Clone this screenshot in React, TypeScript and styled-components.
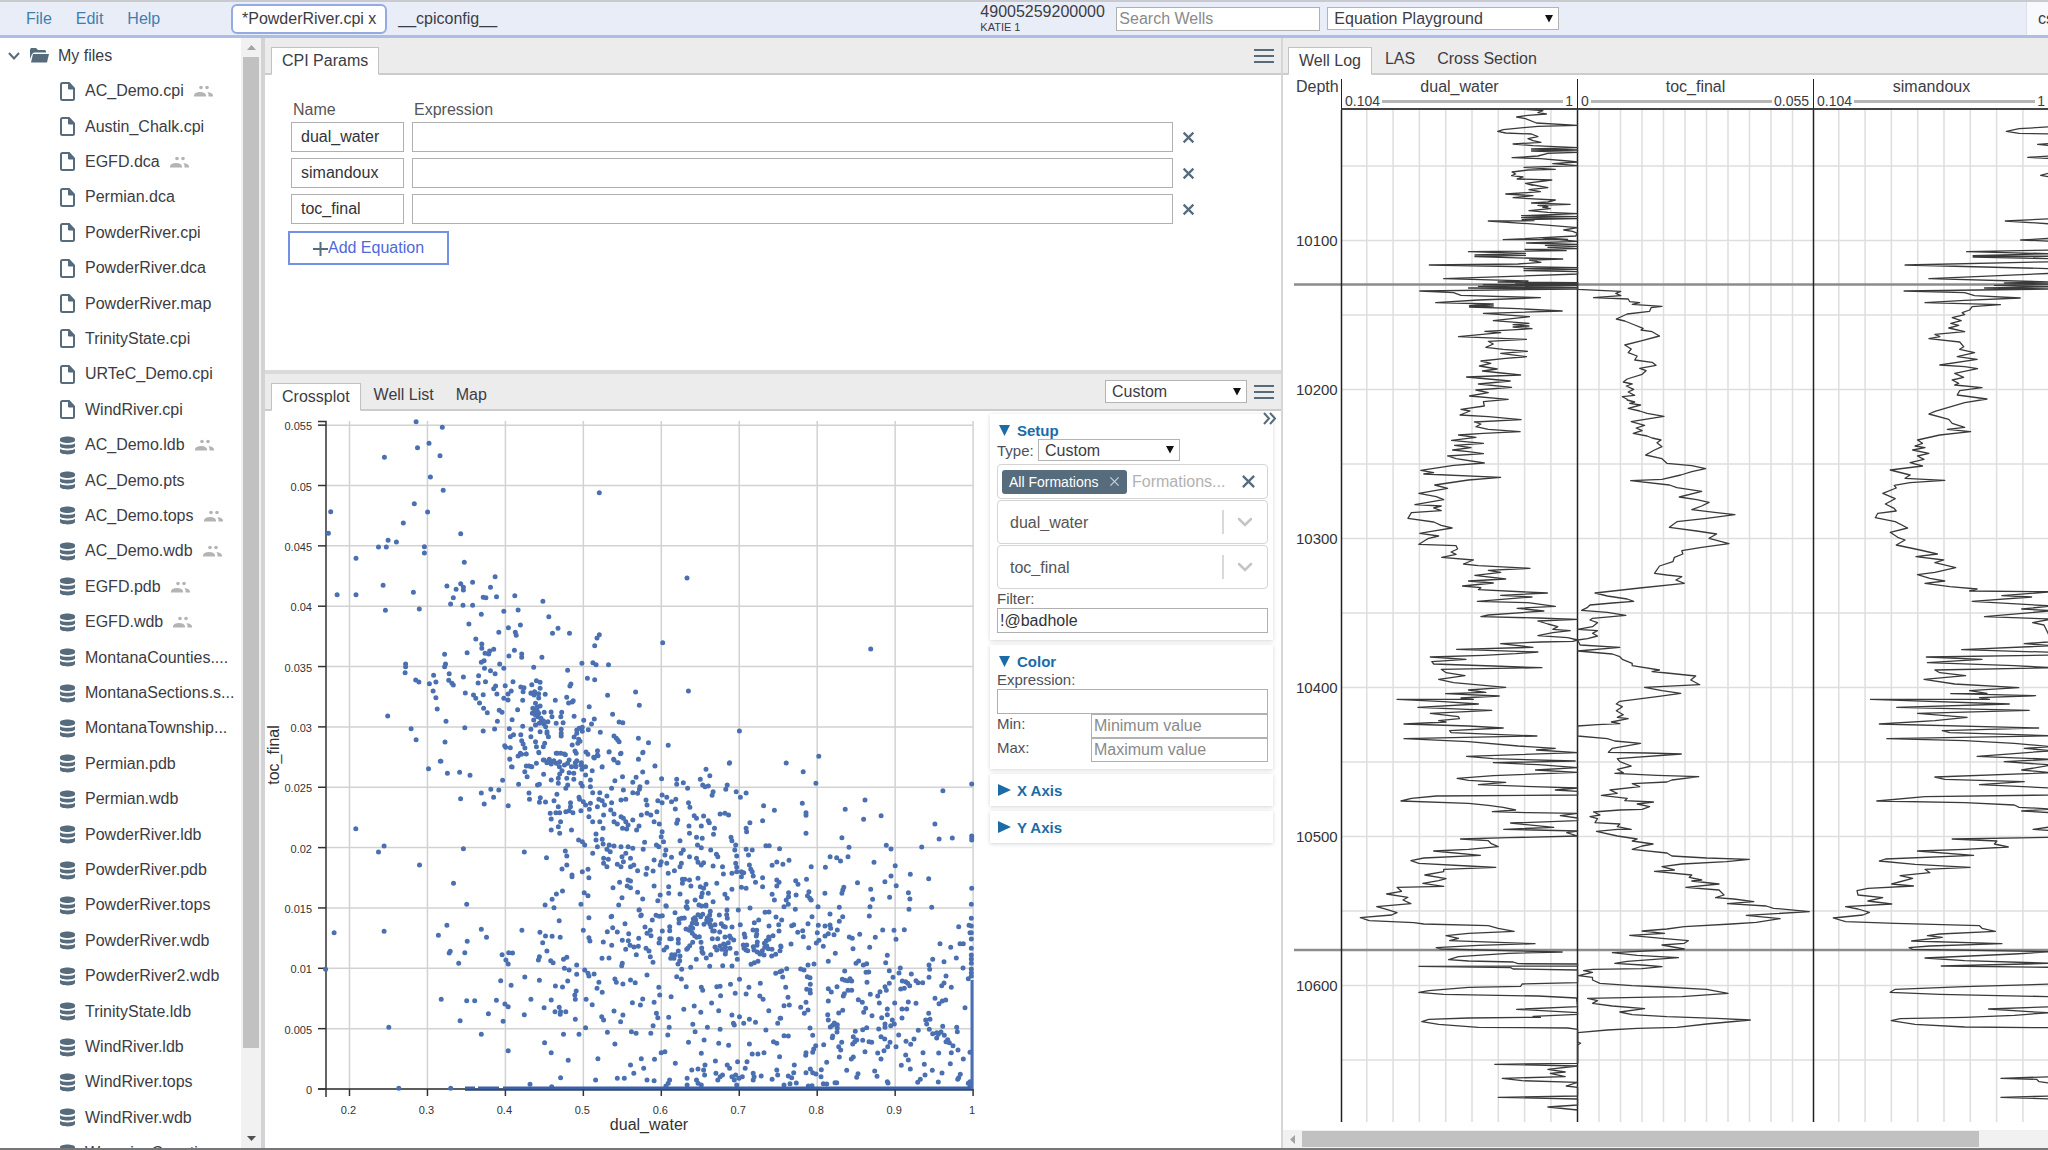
import React from 'react';
import styled, { createGlobalStyle, css } from 'styled-components';

const slate = '#566b7c';
const line = '#cccccc';

const GlobalStyle = createGlobalStyle`
  *, *::before, *::after { box-sizing: border-box; }
  body { margin: 0; background: #fff; overflow: hidden; }
  body, button, input, select {
    font-family: "Liberation Sans", Arial, sans-serif;
    font-size: 16px;
    color: #3c3c44;
  }
  button { cursor: pointer; }
`;

const Page = styled.div`
  display: flex;
  flex-direction: column;
  height: 100vh;
  border-top: 2px solid #c9cacf;
  border-bottom: 2px solid #77777a;
`;

/* ---------- header ---------- */

const Header = styled.header`
  flex: none;
  display: grid;
  grid-template-columns: minmax(0, 981fr) auto minmax(0, 489fr);
  height: 36px;
  background: #e9edf8;
  border-bottom: 3px solid #aebde2;
`;

const HeaderLeft = styled.div`
  display: flex;
  align-items: center;
`;

const Menu = styled.nav`
  display: flex;
  gap: 24px;
  width: 231px;
  padding-left: 26px;
`;

const MenuButton = styled.button`
  padding: 0;
  border: 0;
  background: none;
  color: #3f7fae;
`;

const FileTab = styled.button<{ $active?: boolean }>`
  height: 30px;
  padding: 0 9px;
  border: 2px solid ${p => (p.$active ? '#93abe2' : 'transparent')};
  border-radius: 6px;
  background: ${p => (p.$active ? '#fff' : 'transparent')};
  white-space: nowrap;
`;

const HeaderCenter = styled.div`
  display: flex;
  align-items: center;
  gap: 7px;
`;

const WellName = styled.div`
  display: flex;
  flex-direction: column;
  width: 129px;
  line-height: 16px;
`;

const WellSub = styled.span`
  font-size: 11px;
  line-height: 14px;
`;

const HeaderRight = styled.div`
  display: flex;
  justify-content: flex-end;
`;

const UserButton = styled.button`
  width: 22px;
  padding: 0 0 0 11px;
  border: 0;
  border-left: 1px solid #dcdfe8;
  background: #f8f9fc;
  overflow: hidden;
  text-align: left;
`;

/* ---------- form parts ---------- */

const TextInput = styled.input<{ $h: number; $w?: string; $pad?: number }>`
  width: ${p => p.$w ?? '100%'};
  min-width: 0;
  height: ${p => p.$h}px;
  padding: 0 ${p => p.$pad ?? 2}px;
  border: 1px solid #b0b0b0;
  background: #fff;
  color: #333338;
  &::placeholder { color: #8a8a8a; opacity: 1; }
`;

const SelectWrap = styled.span<{ $w: string }>`
  display: inline-grid;
  grid-template-columns: minmax(0, 1fr);
  align-items: center;
  width: ${p => p.$w};
  > * { grid-area: 1 / 1; }
  > svg { justify-self: end; pointer-events: none; }
`;

const NativeSelect = styled.select<{ $h: number }>`
  appearance: none;
  width: 100%;
  height: ${p => p.$h}px;
  padding: 0 24px 0 6px;
  border: 1px solid #b4b4b4;
  border-radius: 0;
  background: #fff;
`;

const SoftSelect = styled(NativeSelect)`
  padding: 0 56px 0 12px;
  border-color: #d4d4d4;
  border-radius: 4px;
  color: #555;
`;

function DropDown({ label, value, w, h }: { label: string; value: string; w: string; h: number }) {
  return (
    <SelectWrap $w={w}>
      <NativeSelect aria-label={label} $h={h} defaultValue={value}>
        <option>{value}</option>
      </NativeSelect>
      <svg width="16" height="10" viewBox="0 0 16 10"><path d="M2 1h8L6 8.500z" fill="#111" /></svg>
    </SelectWrap>
  );
}

function CurveSelect({ label, value }: { label: string; value: string }) {
  return (
    <SelectWrap $w="100%">
      <SoftSelect aria-label={label} $h={44} defaultValue={value}>
        <option>{value}</option>
      </SoftSelect>
      <svg width="48" height="24" viewBox="0 0 48 24" fill="none">
        <path d="M3 0v24" stroke="#ccc" strokeWidth="1.500" />
        <path d="M19 9l6 6 6-6" stroke="#c4c4c4" strokeWidth="2.500" strokeLinecap="round" />
      </svg>
    </SelectWrap>
  );
}

const IconButton = styled.button`
  display: flex;
  align-items: center;
  justify-content: center;
  padding: 0;
  border: 0;
  background: none;
`;

function Cross({ size, color = slate, weight = 2 }: { size: number; color?: string; weight?: number }) {
  return (
    <svg width={size} height={size} viewBox="0 0 12 12">
      <path d="M1.500 1.500l9 9M10.500 1.500l-9 9" stroke={color} strokeWidth={weight} />
    </svg>
  );
}

function Burger({ label }: { label: string }) {
  return (
    <IconButton aria-label={label}>
      <svg width="20" height="16" viewBox="0 0 20 16">
        <path d="M0 2h20M0 8h20M0 14h20" stroke={slate} strokeWidth="2" />
      </svg>
    </IconButton>
  );
}

/* ---------- workspace ---------- */

const Workspace = styled.div`
  flex: 1;
  min-height: 0;
  display: grid;
  grid-template-columns: 261px minmax(0, 1020fr) minmax(0, 767fr);
  grid-template-rows: minmax(0, 1fr);
`;

const Sidebar = styled.aside`
  display: flex;
  overflow: hidden;
`;

const Tree = styled.ul`
  flex: 1;
  display: flex;
  flex-direction: column;
  height: calc(100% + 23px);
  margin: 0;
  padding: 0;
  list-style: none;
`;

const TreeRow = styled.li<{ $root?: boolean }>`
  flex: 1;
  display: flex;
  align-items: center;
  padding-left: ${p => (p.$root ? 8 : 60)}px;
  gap: ${p => (p.$root ? 9 : 10)}px;
  white-space: nowrap;
  line-height: 20px;
  svg { flex: none; }
`;

const ScrollTrack = styled.div<{ $horizontal?: boolean }>`
  flex: none;
  display: flex;
  align-items: center;
  background: #f1f1f1;
  ${p =>
    p.$horizontal
      ? css`height: 18px;`
      : css`
          flex-direction: column;
          width: 20px;
        `}
`;

const ScrollThumb = styled.div<{ $horizontal?: boolean; $size: number }>`
  flex: ${p => p.$size} 1 0;
  ${p => (p.$horizontal ? 'height: 16px;' : 'width: 16px;')}
  background: #c1c1c1;
`;

const ScrollSpace = styled.div<{ $size: number }>`
  flex: ${p => p.$size} 1 0;
`;

const ScrollArrow = styled.div`
  flex: none;
  display: flex;
  align-items: center;
  justify-content: center;
  width: 19px;
  height: 19px;
`;

const Middle = styled.main`
  display: grid;
  grid-template-rows: minmax(0, 332fr) minmax(0, 778fr);
  border-left: 4px solid #d3d3d5;
`;

const Panel = styled.section<{ $divided?: boolean }>`
  display: flex;
  flex-direction: column;
  min-width: 0;
  min-height: 0;
  ${p => p.$divided && 'border-top: 4px solid #dadada;'}
`;

const TabBar = styled.div`
  flex: none;
  display: flex;
  align-items: flex-end;
  height: 37px;
  padding: 0 7px 0 6px;
  border-bottom: 2px solid ${line};
  background: #ececec;
`;

const Tab = styled.button<{ $active?: boolean }>`
  height: 28px;
  padding: 0 10px;
  border: 1px solid transparent;
  background: transparent;
  white-space: nowrap;
  ${p =>
    p.$active &&
    css`
      margin: 0 2px -2px 0;
      border-color: #c2c2c2;
      border-bottom-color: #fff;
      background: #fff;
    `}
`;

const TabTools = styled.div`
  display: flex;
  align-items: center;
  align-self: center;
  gap: 7px;
  margin-left: auto;
`;

/* ---------- equations ---------- */

const Equations = styled.div`
  padding: 24px 86px 0 23px;
`;

const EquationRow = styled.div`
  display: grid;
  grid-template-columns: 113px minmax(0, 1fr) 14px;
  column-gap: 8px;
  align-items: center;
  padding-left: 3px;
  margin-bottom: 6px;
`;

const EquationHead = styled(EquationRow)`
  margin-bottom: 2px;
  line-height: 21px;
  color: #55555a;
  span { padding-left: 2px; }
`;

const AddButton = styled.button`
  display: flex;
  align-items: center;
  justify-content: center;
  width: 161px;
  height: 34px;
  margin-top: 7px;
  border: 2px solid #7390e4;
  background: #fff;
  color: #5068dc;
`;

/* ---------- crossplot ---------- */

const CrossplotBody = styled.div`
  position: relative;
  flex: 1;
  display: grid;
  grid-template-columns: minmax(0, 1fr) 291px;
  min-height: 0;
`;

const PlotSvg = styled.svg`
  display: block;
  width: 100%;
  height: auto;
  font-family: "Liberation Sans", Arial, sans-serif;
`;

const Settings = styled.div`
  display: flex;
  flex-direction: column;
  gap: 5px;
  padding: 3px 8px 0 0;
`;

const Card = styled.section`
  display: flex;
  flex-direction: column;
  padding: 7px 5px 7px 7px;
  background: #fff;
  box-shadow: 0 1px 4px rgba(0, 0, 0, 0.17);
`;

const CardTitle = styled.button`
  display: flex;
  align-items: center;
  gap: 5px;
  height: 18px;
  padding: 0 0 0 1px;
  border: 0;
  background: none;
  color: #1b6ca6;
  font-size: 15px;
  font-weight: bold;
`;

const FieldLabel = styled.label`
  font-size: 15px;
  line-height: 19px;
  color: #505058;
`;

const TypeRow = styled.div`
  display: flex;
  align-items: center;
  justify-content: space-between;
  width: 183px;
  height: 22px;
  margin-bottom: 3px;
`;

const RangeRow = styled.div`
  display: grid;
  grid-template-columns: 94px minmax(0, 1fr);
`;

const TagBox = styled.div`
  display: flex;
  align-items: center;
  height: 35px;
  padding: 0 11px 0 4px;
  border: 1px solid #d4d4d4;
  border-radius: 4px;
`;

const Tag = styled.span`
  flex: none;
  display: flex;
  align-items: center;
  justify-content: space-between;
  width: 125px;
  height: 24px;
  padding: 0 7px;
  border-radius: 3px;
  background: ${slate};
  color: #fff;
  font-size: 14px;
`;

const TagInput = styled.input`
  flex: 1;
  min-width: 0;
  padding: 0 0 0 5px;
  border: 0;
  &::placeholder { color: #b2b2b2; opacity: 1; }
`;

const Stack = styled.div`
  display: grid;
  grid-template-columns: minmax(0, 1fr);
  gap: 1px;
`;

const Collapse = styled(IconButton)`
  position: absolute;
  top: 1px;
  right: 4px;
`;

/* ---------- well log ---------- */

const LogPanel = styled(Panel)`
  border-left: 2px solid #d6d6d6;
  overflow: hidden;
`;

const LogTabBar = styled(TabBar)`
  padding-left: 5px;
`;

const LogHead = styled.div`
  flex: none;
  display: grid;
  grid-template-columns: 58px repeat(3, 236px);
  height: 35px;
  padding-top: 4px;
`;

const DepthHead = styled.div`
  padding-left: 13px;
  line-height: 16px;
`;

const TrackHead = styled.div`
  border-left: 1px solid #222;
  border-bottom: 2px solid #444;
  line-height: 16px;
  text-align: center;
`;

const Scale = styled.div`
  display: flex;
  align-items: center;
  gap: 2px;
  padding: 0 4px 0 3px;
  font-size: 14px;
  line-height: 13px;
  &::after { content: ''; order: 1; flex: 1; height: 3px; background: #b5b5b5; }
  span:last-child { order: 2; }
`;

const LogBody = styled.div`
  flex: 1;
  min-height: 0;
  overflow: hidden;
  svg { display: block; font-family: "Liberation Sans", Arial, sans-serif; }
`;

/* ---------- data ---------- */

const files: [string, boolean?][] = [
  ['AC_Demo.cpi', true], ['Austin_Chalk.cpi'], ['EGFD.dca', true], ['Permian.dca'], ['PowderRiver.cpi'],
  ['PowderRiver.dca'], ['PowderRiver.map'], ['TrinityState.cpi'], ['URTeC_Demo.cpi'], ['WindRiver.cpi'],
  ['AC_Demo.ldb', true], ['AC_Demo.pts'], ['AC_Demo.tops', true], ['AC_Demo.wdb', true], ['EGFD.pdb', true],
  ['EGFD.wdb', true], ['MontanaCounties....'], ['MontanaSections.s...'], ['MontanaTownship...'], ['Permian.pdb'],
  ['Permian.wdb'], ['PowderRiver.ldb'], ['PowderRiver.pdb'], ['PowderRiver.tops'], ['PowderRiver.wdb'],
  ['PowderRiver2.wdb'], ['TrinityState.ldb'], ['WindRiver.ldb'], ['WindRiver.tops'], ['WindRiver.wdb'],
  ['WyomingCounti...'],
];

type Pt = [number, number];
const parse = (s: string, x0: number, y0: number, sx: number): Pt[] =>
  s.trim().split(/\s+/).map(p => {
    const [x, y] = p.split(',').map(Number);
    return [x0 + x / sx, y0 + y / 3];
  });

const upperPoints = `
340,155 397,172 368,220 343,233 271,262 392,257 371,321 399,361 739,368 336,401 365,426 154,425 312,459 149,490 437,491
279,511 297,516 258,531 275,531 358,530 358,549 209,565 445,577 512,620 930,624 463,637 437,641 407,648 268,646 502,652
443,652 427,658 443,660 334,667 168,674 209,674 555,677 515,680 486,682 492,683 421,683 616,694 415,702 442,706 463,706
347,717 273,721 531,724 562,720 482,733 629,740 455,762 567,765 541,773 649,775 520,787 556,787 558,796 637,790 674,790
739,794 734,804 729,827 470,807 877,818 1330,837 483,822 483,835 509,838 500,843 490,850 498,852 554,841 451,848 402,853
542,858 570,852 570,862 614,862 488,872 482,877 522,882 701,880 725,878 732,884 759,884 317,882 317,890 404,882 402,890
489,895 531,895 596,892 502,902 512,911 670,901 316,908 412,911 378,916 476,917 443,921 713,925 729,929 339,930 346,936
383,936 369,941 411,931 421,945 418,940 475,939 491,935 551,935 602,932 610,937 592,944 677,942 675,948 534,947 513,948
509,956 568,951 575,953 610,955 573,965 547,963 377,963 447,969 818,966 933,963 757,976 516,972 540,972 465,975 486,974
470,985 590,969 597,975 607,971 607,984 621,973 383,983 668,982 682,992 672,999 680,996 643,991 531,985 540,990 572,991
478,999 487,1015 386,1017 717,1010 826,1006 521,1021 527,1027 495,1028 561,1019 768,1033 602,1018 610,1008 593,1030
607,1030 619,1027 634,1026 657,1027 684,1039 278,1038 549,1049 517,1054 405,1054 636,1040 655,1040 728,1047 705,1051
722,1062 782,1056 790,1058 596,1050 605,1040 617,1052 627,1055 645,1060 660,1058 329,1076 446,1073 511,1077 543,1076
572,1069 1044,1083 600,1065 610,1085 590,1078 622,1070 625,1085 690,1080 702,1072 702,1084 695,1075 690,1090 715,1079
741,1087 656,1090 656,1098 656,1078 486,1083 545,1100 552,1094 568,1094 590,1100 628,1100 684,1101 771,1098 776,1105
824,1105 340,1109 403,1116 694,1108 692,1120 697,1114 782,1115 779,1110 846,1118 570,1112 573,1122 600,1115 602,1130
620,1120 617,1130 533,1127 535,1132 545,1133 577,1134 680,1125 889,1126 686,1143 735,1142 760,1146 785,1151 834,1147
562,1158 567,1150 580,1152 607,1147 645,1150 655,1150 665,1154 710,1146 714,1153 728,1164 736,1157 1217,1159 544,1168
824,1168 394,1174 770,1168 780,1178 617,1170 630,1168 634,1178 645,1180 670,1180 687,1180 1022,1180 1146,1179 549,1191
580,1188 592,1190 602,1180 688,1190 700,1185 745,1191 860,1188 367,1196 600,1000 598,1023 604,1023 600,1035 608,1060
618,1062 612,1047 590,970 598,965 612,1045 625,1090 604,1012 594,1015 640,1172 626,1175 652,1190 690,1172 700,1178`;

const lowerPoints = `
529,27 533,50 554,13 564,12 570,48 561,65 566,80 514,91 548,103 382,34 397,70 423,67 445,76 591,8 575,50 602,30 608,38
617,42 601,73 630,10 635,35 645,12 645,45 655,30 660,50 640,62 635,72 632,85 632,100 655,68 670,10 668,38 680,45 682,58
690,50 665,70 665,88 650,85 652,105 648,115 690,75 680,100 683,108 700,90 704,62 700,110 707,22 715,15 725,50 740,5 750,30
758,38 765,10 802,28 811,8 811,66 837,48 995,38 945,58 953,77 1151,65 1178,100 768,80 752,92 790,97 797,82 805,110 820,97
851,86 883,88 883,103 897,98 906,115 933,88 938,105 943,110 950,108 990,105 987,118 1009,125 1030,129 1508,102 1447,122
1282,150 469,129 489,118 506,120 475,162 495,142 526,167 425,146 570,129 571,148 592,103 594,143 592,157 605,156 588,105
617,90 629,133 623,152 676,142 705,128 720,128 718,148 745,115 770,120 735,138 725,152 765,150 775,148 790,128 800,130
804,118 818,150 820,165 843,152 852,135 862,142 852,158 872,155 881,148 908,158 911,172 960,125 958,136 1018,142 1149,160
1067,167 1090,181 1157,188 1065,212 1157,196 1240,178 1279,208 1316,197 1430,222 1157,250 203,236 263,288 251,306 431,296
560,306 338,345 410,400 438,463 607,323 647,303 650,318 650,345 640,357 661,375 661,380 658,158 658,170 655,182 663,188
648,185 632,170 635,188 615,190 627,188 617,207 637,215 632,230 617,240 635,250 660,240 677,148 690,165 685,155 680,182
700,160 715,170 698,178 730,165 745,158 743,180 750,192 728,195 697,200 705,215 720,215 727,235 712,252 675,270 683,275
688,285 712,270 725,268 727,282 740,285 750,288 715,290 735,298 742,305 705,310 728,325 738,328 728,340 735,350 750,215
757,222 765,200 770,205 775,215 790,210 803,228 780,225 768,235 777,237 798,240 808,195 820,190 828,195 841,185 835,215
846,222 852,245 850,260 855,275 845,290 840,285 860,300 858,315 815,277 812,298 765,290 780,290 790,295 775,310 785,325
767,320 770,335 765,350 757,343 785,350 792,345 800,362 820,355 818,373 835,330 833,363 850,335 848,345 862,340 872,322
865,370 878,362 890,272 892,310 897,300 893,340 890,350 910,320 925,262 937,265 927,285 935,293 925,325 928,337 940,338
935,345 960,348 970,320 967,313 955,300 952,218 925,205 940,198 935,228 950,212 963,235 961,253 975,192 985,190 993,195
880,177 885,210 883,220 909,228 910,250 920,197 1038,218 1030,235 1031,245 998,262 1000,272 1008,285 1006,300 1030,298
1043,300 1035,315 1010,318 1072,287 1079,287 1101,296 980,350 1008,340 1010,352 1037,345 1040,358 1095,336 1121,331
1085,346 1108,343 1168,350 1198,352 1208,320 1222,323 1230,333 1246,320 1248,292 1233,263 1327,286 1337,297 1402,291
1439,267 1467,264 1508,258 1508,270 1508,264 1301,337 1346,347 683,365 695,358 697,383 604,465 619,448 628,432 641,423
623,473 687,428 695,437 680,463 697,503 634,512 748,413 762,397 780,390 778,408 785,393 785,413 800,427 767,443 760,465
803,480 808,495 811,447 744,500 835,408 848,435 843,452 860,467 866,410 866,430 895,388 900,388 910,390 895,400 913,408
890,432 905,455 903,470 928,385 933,410 945,403 940,415 937,430 950,430 968,400 935,440 922,450 930,465 945,465 960,455
985,433 1000,418 990,445 1000,370 982,372 1010,365 1020,365 1020,380 1025,368 1043,365 1045,378 1020,412 1030,415 1050,397
1065,383 1065,410 1095,390 1100,397 1095,408 1135,392 1140,403 1158,388 1085,433 1090,450 1120,428 1120,440 1136,435
1163,425 1160,437 1165,445 1168,450 1115,450 1110,458 1197,430 1237,412 1235,420 1233,430 1266,398 1294,418 1298,448
1324,395 1337,378 1348,407 1378,373 1417,386 1334,442 1374,428 1377,447 1508,415 1183,470 1209,492 1228,472 1234,500
1292,470 1292,498 1375,478 1422,472 1508,462 157,548 263,544 396,526 378,556 403,604 401,609 434,608 439,574 469,538
480,562 555,541 593,547 421,640 513,614 527,608 535,609 521,630 526,642 599,578 605,558 619,559 608,603 636,562 592,620
590,630 616,632 621,638 643,628 650,622 645,655 655,660 671,645 671,673 688,660 695,670 685,541 697,563 699,573 561,681
510,692 532,706 592,691 626,708 641,711 652,693 718,697 714,715 725,727 670,723 667,735 668,748 697,678 708,672 752,687
755,697 769,702 785,690 795,698 820,675 845,712 847,735 871,740 883,680 893,687 903,710 935,712 938,721 968,710 975,709
976,737 997,703 1016,688 1007,730 1036,712 1030,732 1060,700 1059,738 1066,748 1114,712 1120,742 384,748 438,752 455,752
501,751 574,748 519,762 526,770 484,791 560,794 424,812 515,814 273,832 469,853 526,902 603,878 617,908 602,773 617,750
634,772 625,785 637,785 648,785 636,793 668,808 691,748 704,764 690,833 643,853 676,853 653,931 637,983 716,926 711,990
572,1003 750,783 724,800 728,810 769,795 764,815 736,847 752,882 789,758 806,765 811,747 787,845 797,850 835,757 840,790
843,803 833,827 828,850 866,802 867,832 864,855 898,778 920,768 934,787 957,759 972,782 917,823 922,845 948,832 975,838
941,870 908,877 972,880 993,886 1000,795 1016,800 1003,820 1005,825 1025,820 1037,808 1050,817 1072,840 1078,782 1102,805
1097,820 1088,875 1095,880 1037,882 850,908 858,905 935,910 965,933 880,940 808,926 813,955 836,928 785,945 792,970
757,985 772,985 820,990 835,992 294,1015 404,1015 139,658 618,1010 865,1000 868,990 860,1008 905,985 905,1005 928,1000
925,990 942,975 940,960 966,970 975,980 980,975 990,945 995,955 1000,980 1005,990 1015,985 1022,980 1012,935 1032,935
1028,955 1045,970 1047,980 1062,978 1085,988 1095,960 1097,975 915,960 928,957 943,945 1055,912 1043,912 1068,908
1101,920 970,990 1008,975 1010,1005 935,1005 1045,990`;

const corePoints = `
118,269 122,287 35,289 75,311 38,323 22,335 52,336 86,341 135,321 141,340 151,331 153,347 116,355 157,300 10,366 35,376
67,361 85,362 90,376 77,388 102,381 115,379 109,404 138,385 147,393 151,410 159,427 6,415 27,414 67,430 65,437 168,286
178,289 187,287 199,259 225,278 187,333 209,320 209,332 209,356 214,356 179,356 177,369 192,390 200,382 235,358 235,369
235,393 240,408 215,404 225,404 212,415 222,415 239,422 234,432 237,297 245,295 253,294 237,309 262,265 260,260 280,297
284,293 294,284 302,290 308,283 287,299 290,311 277,310 272,320 278,325 268,331 258,327 277,340 284,347 290,352 298,350
278,367 269,377 263,385 260,388 305,384 306,395 309,400 289,418 303,367 319,414 332,404 329,439 368,437 396,438 412,418
409,400 331,274 329,285 322,293 332,300 320,301 324,306 312,313 330,313 333,321 345,314 338,333 343,333 359,336 337,356
353,356 364,311 370,319 376,321 396,321 381,270 380,284 382,295 358,285 375,351 389,348 401,360 392,354 385,368 371,372
376,380 360,378 345,381 350,390 365,388 377,393 376,402 390,385 421,314 415,270 463,308 476,300 459,330 470,331 470,343
469,348 433,342 435,351 430,375 440,375 432,385 438,390 443,392 460,380 471,376 472,366 462,390 472,396 480,402 487,392
494,382 505,386 516,388 500,377 493,370 499,362 507,358 506,351 519,347 485,397 492,405 515,408 527,403 540,392 542,378
537,333 536,314 528,291 545,300 507,318 495,277 507,276 574,317 580,314 593,337 609,331 610,350 574,372 626,383 624,311
636,290 655,317 652,339 649,369 657,361 670,379 673,348 685,342 687,330 701,345 713,330 691,318 690,283 673,318 718,303
728,290 717,263 707,400 685,425 747,351 757,354 760,385 768,430 775,425 474,424 463,428 453,433 561,445 549,470 540,455
527,460 603,446 613,450 625,434 643,432 297,255 305,258 245,448 272,442 318,258 450,264 552,262 586,267 655,261`;

const cornerPoints = `
12,20 25,13 46,28 93,0 114,20 178,22 270,20 268,48 387,28 455,22 188,50 178,64 150,42 96,50 5,60 84,71 115,76 135,78
150,75 152,85 172,90 112,98 135,108 145,101 162,104 117,121 109,129 130,139 35,77 41,74 53,97 68,92 70,110 33,132 3,140
86,143 208,111 217,115 239,103 286,112 308,90 342,91 373,89 348,118 269,142 219,146 166,160 145,184 102,192 84,195 62,207
72,210 20,206 5,213 8,231 82,230 90,233 91,253 80,268 90,270 91,279 17,262 24,292 12,317 28,315 78,307 62,322 84,330
73,340 2,355 90,384 98,406 12,407 25,408 194,213 228,190 236,183 250,195 260,191 258,217 266,216 261,247 187,238 195,241
203,242 210,236 215,243 204,271 215,271 193,281 190,288 171,260 145,266 154,276 145,303 188,331 176,339 143,344 145,360
163,369 172,374 158,376 151,381 172,384 171,396 158,408 157,413 235,299 247,307 271,283 257,325 251,337 276,347 298,309
322,327 322,344 305,353 322,166 317,188 328,212 339,232 328,250 315,260 319,271 300,275 293,288 361,204 357,219 394,222
367,243 377,245 383,250 389,257 373,265 362,267 408,242 414,248 428,248 344,309 385,306 408,310 366,327 380,327 366,354
337,360 343,372 332,377 315,372 315,382 296,387 260,383 248,389 226,394 480,131 512,142 540,131 550,131 536,80 567,76
570,98 458,178 447,195 449,208 447,232 492,185 529,174 549,204 498,228 492,249 485,257 514,262 465,295 487,303 497,300
477,311 555,323 565,236 446,340 437,360 450,358 440,372 448,388 458,401 470,398 475,403 470,414 483,396 493,406 488,379
530,382 532,395 503,419 508,428 498,425 519,437 534,450 550,477 570,457 415,391 356,405 402,417 378,424 392,433 348,440
303,410 314,417 330,427 323,440 312,452 293,459 303,477 255,455 248,421 267,425 275,427 220,410 230,420 218,432 224,425
220,471 214,477 185,427 176,440 182,450 178,471 131,434 107,437 101,447 98,457 78,458 77,466 140,487 43,495 41,518 25,528
35,533 30,551 12,555 49,549 78,518 91,507 98,518 108,522 123,530 124,509 85,558 96,557 130,551 140,552 165,548 170,548
200,511 234,521 230,532 284,513 291,529 322,545 324,549 364,496 377,465 385,480 391,507 429,458 433,493 457,511 476,459
486,519 475,546 435,525 421,538 413,547 514,458 511,491 541,523 536,533 533,538 565,550 570,545 570,558 574,13 574,55
574,78 574,98 574,117 574,145 574,165 574,177 574,190 574,207 574,218 574,228`;

const dots: Pt[] = [
  ...parse(upperPoints, 260, 370, 2.1778),
  ...parse(lowerPoints, 260, 750, 2.1189).filter(([x, y]) => !(x > 781 && y > 901)),
  ...parse(corePoints, 600, 820, 3).filter(([x, y]) => !(x > 781 && y > 901)),
  ...parse(cornerPoints, 780, 900, 3),
];
const dotPath = dots.map(([x, y]) => `M${x.toFixed(1)} ${y.toFixed(1)}h.01`).join('');

const K = 2.0154;
const curve = (parts: string[]) =>
  'M' + [0, 400, 780]
    .flatMap((y0, i) => (parts[i] ? parse(parts[i], 1270, y0, K) : []))
    .map(([x, y]) => `${x.toFixed(1)} ${y.toFixed(1)}`)
    .join('L');

const dualWater = curve([
  `512,328 550,332 540,338 557,342 520,346 497,351 515,356 537,369 620,376 540,379 470,389 459,394 475,399 527,402 540,410
  520,416 530,422 546,427 490,432 530,437 620,443 527,447 620,450 527,453 620,457 560,460 540,468 488,473 545,476 600,483
  620,486 570,491 620,497 512,502 575,508 520,510 488,516 495,522 487,527 510,531 498,537 568,540 515,550 530,556 520,552
  560,563 522,569 545,575 475,582 530,587 490,593 575,600 560,606 527,609 605,613 540,616 560,620 550,622 565,626 522,632
  560,637 620,641 507,647 620,650 507,653 620,656 508,659 532,662 440,663 520,671 570,677 620,683 592,690 610,694 620,700
  616,708 470,719 600,718 550,714 620,724 517,729 620,733 555,736 620,739 560,742 620,746 514,748 597,752 400,755 515,760
  413,765 515,766 413,770 590,777 523,780 546,787 500,792 321,795 620,803 512,806 620,808 512,812 620,815 620,822 350,836
  520,843 460,846 620,848 495,849 620,852 430,854 620,856 420,859 620,862 400,864 620,867 302,873 370,878 385,886 545,893
  420,900 334,908 450,912 402,917 450,918 402,921 500,926 589,933 430,940 523,950 450,962 522,970 490,974 522,978 490,981
  528,986 433,994 465,998 380,1010 517,1018 440,1024 450,1032 435,1042 470,1048 519,1054 465,1060 517,1070 475,1075
  425,1083 445,1090 422,1098 458,1107 428,1113 505,1125 396,1131 484,1143 420,1152 487,1162 415,1170 440,1178 402,1188
  480,1198`,
  `430,5 432,18 385,28 403,33 383,45 440,50 506,59 412,66 425,72 415,80 440,88 504,95 430,100 380,105 415,112 366,121
  430,130 372,136 405,143 368,150 400,155 430,161 358,168 375,176 432,189 370,196 304,211 330,218 310,222 465,232 400,240
  332,255 358,265 300,280 335,290 350,299 292,314 345,318 330,324 345,332 285,338 278,355 330,366 345,376 367,384 325,394
  302,400 340,408 318,416 300,433 375,437 378,447 365,456 375,463 346,472 410,480 390,492 420,497 524,505 440,511 465,517
  413,526 475,537 400,543 450,549 388,558 425,563 420,569 559,579 465,586 528,591 418,604 520,608 575,619 498,625 552,633
  440,645 425,650 540,654 620,658 540,663 560,672 580,680 570,688 605,692 570,698 540,707 600,713 620,720 610,724 545,726
  465,731 530,742 376,748 540,756 495,761 430,766 323,771 395,778 326,785 330,792 450,798 548,803 345,808 355,818 393,827
  340,838 370,848 475,862 400,870 435,877 354,881 462,888 385,894 410,898 256,898 350,905 420,912 298,922 447,931 323,940
  380,950 382,956 340,962 355,966 270,972 400,978 470,984 362,992 365,998 538,1008 270,1016 400,1025 500,1038 575,1045
  537,1050 620,1058 396,1069 450,1076 615,1083 450,1088 540,1094 620,1103 535,1110 620,1117 450,1127 377,1135 400,1141
  475,1147 420,1154 530,1160 620,1164 575,1170 620,1174`,
  `620,45 335,48 285,55 264,63 400,70 440,76 470,82 495,90 448,95 520,98 620,100 585,107 620,114 620,122 485,129 572,142
  471,148 620,153 598,158 620,168 480,173 384,177 440,182 445,190 460,200 400,208 330,213 424,226 310,234 284,242 300,250
  400,258 455,262 350,268 350,275 312,285 355,296 340,302 308,310 350,319 256,322 265,334 235,342 278,352 268,360 284,371
  215,380 235,388 256,398 245,405 182,413 200,422 290,428 310,432 440,437 460,445 492,454 400,460 355,467 380,475 362,482
  460,487 534,491 420,496 335,503 345,507 589,516 480,520 380,530 360,539 400,543 490,546 500,551 620,552 620,558 300,559
  485,563 490,567 620,570 620,608 508,612 505,619 400,622 320,632 300,637 350,643 540,648 618,654 620,680 497,688 620,698
  620,703 530,709 545,712 400,714 320,718 306,725 340,733 420,742 600,744 620,748 620,850 453,853 620,858 560,868 595,876
  565,880 595,890 468,895 508,902 620,907 597,918 620,922 620,948 460,952 620,957 620,975 560,981 620,990`,
]);

const tocFinal = curve([
  `620,846 620,868 707,874 697,880 707,887 652,893 722,897 725,905 745,908 730,913 790,919 768,923 765,934 720,942 698,957
  715,963 735,975 752,985 748,990 770,995 785,1008 750,1022 715,1035 728,1047 722,1058 740,1068 735,1080 770,1087 778,1096
  745,1105 758,1112 750,1123 720,1137 712,1146 730,1152 718,1158 733,1168 722,1176 735,1186 710,1190 720,1198`,
  `720,0 735,6 725,10 747,15 722,25 745,33 760,40 794,49 765,56 728,65 755,76 738,84 750,92 732,100 760,108 770,114 788,120
  780,128 790,140 775,150 757,165 790,176 800,190 850,197 878,206 850,215 828,225 790,238 727,242 805,255 820,263 870,274
  825,291 860,299 885,307 870,318 850,329 900,338 937,344 880,355 820,365 805,382 860,393 900,402 885,415 925,431 870,442
  830,452 832,462 815,472 812,485 785,498 775,520 800,525 830,530 818,540 835,550 745,564 655,579 680,588 720,597 733,604
  690,609 645,615 640,622 628,631 680,637 717,646 650,655 645,660 660,668 650,680 620,688 660,692 650,700 660,708 640,716
  620,720 625,735 705,742 620,753 690,762 705,770 710,778 730,790 730,797 785,810 770,815 800,819 858,828 848,840 866,854
  755,862 790,872 828,880 780,890 705,904 698,912 710,920 698,932 712,944 700,952 722,956 688,966 705,971 660,974 620,978
  620,1008 680,1016 695,1023 747,1030 690,1045 682,1057 760,1059 829,1062 700,1076 705,1085 728,1098 700,1108 712,1118
  695,1120 780,1126 864,1130 810,1140`,
  `800,6 730,11 745,20 685,30 700,40 668,46 720,55 715,62 773,66 740,72 765,80 750,88 705,90 652,96 665,105 645,110
  660,116 655,128 705,132 700,140 728,148 700,148 658,154 700,168 740,177 730,183 772,192 750,198 730,208 800,219 810,228
  880,234 966,238 920,245 830,252 790,260 815,270 775,274 850,285 845,292 870,300 850,303 905,312 838,322 905,330 915,345
  898,353 935,357 975,365 922,371 1000,378 1015,385 1087,395 960,406 1028,416 980,427 930,432 835,440 800,447 750,453
  795,460 725,466 790,475 843,482 835,490 790,495 835,507 800,510 690,518 740,526 823,533 720,544 695,550 750,555 790,560
  750,566 650,568 632,572 650,577 622,587 650,592 650,600 665,610 730,617 790,621 880,628 923,640 830,650 740,652 640,655
  660,662 650,670 690,678 755,686 705,696 730,704 800,710 900,715 968,720 880,732 820,742 740,745 680,750 620,758 620,785
  626,790 620,795 620,850`,
]);

const simandoux = curve([
  `1576,380 1510,386 1484,394 1510,400 1576,402 1576,430 1547,433 1576,437 1576,468 1527,472 1576,476 1576,517 1553,526
  1576,532 1576,656 1482,663 1576,672 1576,715 1513,720 1576,724 1576,750 1404,755 1576,761 1417,767 1576,769 1417,771
  1576,776 1576,785 1280,795 1576,806 1576,820 1328,836 1576,846 1480,849 1576,852 1460,856 1576,860 1440,864 1576,867
  1278,873 1400,878 1420,887 1512,894 1400,901 1320,908 1472,914 1415,920 1410,930 1395,938 1400,944 1375,953 1393,962
  1372,970 1388,976 1368,984 1400,995 1340,1003 1350,1010 1328,1016 1390,1026 1398,1040 1390,1048 1420,1058 1385,1070
  1425,1078 1350,1095 1400,1100 1426,1106 1380,1120 1398,1132 1375,1140 1388,1150 1380,1155 1435,1163 1390,1172 1385,1185
  1445,1197`,
  `1400,8 1340,34 1328,42 1368,58 1375,70 1400,82 1365,88 1412,95 1350,105 1305,120 1315,130 1300,138 1320,143 1295,150
  1328,160 1305,168 1318,178 1290,188 1315,198 1250,210 1290,225 1280,235 1360,241 1290,248 1258,256 1262,264 1235,280
  1260,296 1240,312 1258,325 1262,333 1225,340 1220,353 1260,365 1285,384 1250,397 1265,412 1280,420 1262,435 1310,450
  1345,462 1302,470 1358,480 1340,488 1382,503 1340,517 1305,524 1330,535 1360,543 1320,550 1370,560 1425,567 1410,573
  1576,575 1475,587 1535,591 1415,604 1576,618 1515,627 1576,632 1440,650 1576,657 1537,668 1560,675 1568,700 1576,725
  1520,731 1576,737 1394,749 1576,757 1576,765 1323,771 1435,778 1325,788 1500,797 1576,803 1340,810 1350,818 1402,827
  1318,838 1380,852 1509,863 1410,872 1445,880 1372,881 1543,887 1430,893 1450,898 1210,898 1490,912 1263,922 1530,931
  1305,940 1405,952 1340,962 1228,972 1549,984 1355,992 1370,998 1576,1007 1243,1016 1400,1022 1500,1030 1576,1040
  1520,1045 1576,1052 1425,1069 1576,1078 1480,1085 1576,1095 1515,1110 1576,1118 1340,1131 1360,1138 1520,1145 1430,1154
  1576,1164`,
  `1576,45 1320,50 1223,63 1400,68 1500,75 1510,82 1576,87 1515,93 1576,98 1576,140 1538,148 1576,152 1576,172 1375,177
  1465,183 1460,192 1488,201 1400,208 1305,213 1418,226 1240,237 1228,243 1300,253 1411,262 1320,268 1330,278 1270,287
  1295,295 1253,312 1297,318 1205,325 1183,332 1185,345 1235,353 1205,363 1253,372 1160,380 1185,387 1208,397 1195,405
  1135,414 1160,425 1260,430 1430,437 1435,445 1462,454 1350,462 1325,467 1355,472 1293,483 1475,491 1330,498 1288,503
  1295,508 1576,515 1500,522 1320,534 1400,542 1576,550 1353,558 1576,562 1576,612 1400,620 1260,628 1250,637 1350,643
  1576,650 1576,680 1448,687 1530,695 1569,698 1500,706 1400,712 1270,716 1252,722 1300,733 1400,741 1576,743 1576,890
  1473,895 1545,898 1550,905 1576,910 1576,948 1473,952 1576,957`,
]);

/* ---------- icons ---------- */

const FileIcon = () => (
  <svg width="15" height="19" viewBox="0 0 15 19" fill="none" stroke={slate} strokeWidth="2">
    <path d="M1 2.500Q1 1 2.500 1H9l5 5.500v10q0 1.500-1.500 1.500h-10Q1 18 1 16.500z" />
    <path d="M8.500 1v6H14z" fill={slate} strokeWidth="1" />
  </svg>
);

const DatabaseIcon = () => (
  <svg width="15" height="19" viewBox="0 0 15 19">
    <path
      fill={slate}
      d="M0 3.200C0-.4 15-.4 15 3.200v1.300C15 7.800 0 7.800 0 4.500zM0 7.200c2 2.200 13 2.200 15 0v3c0 3-15 3-15 0zM0 12.800c2 2.200 13 2.200 15 0v3c0 3.500-15 3.500-15 0z"
    />
  </svg>
);

const PeopleIcon = () => (
  <svg width="19" height="12" viewBox="0 0 19 12" fill="#b4b4b4">
    <circle cx="7" cy="2.500" r="1.800" />
    <path d="M0 11.500V10q1-2.800 6-3 5 .2 6 3v1.500z" />
    <circle cx="13" cy="2.500" r="1.800" />
    <path d="M13.500 7q4.500.5 5.500 3v1.500h-4.500q.3-3-1-4.500z" />
  </svg>
);

const Triangle = ({ open }: { open?: boolean }) => (
  <svg width="14" height="12" viewBox="0 0 14 12" fill="#1b6ca6">
    <path d={open ? 'M1 1h11L6.500 12z' : 'M0 0l13 6-13 6z'} />
  </svg>
);

/* ---------- charts ---------- */

const range = (n: number) => Array.from({ length: n }, (_, i) => i);

function Crossplot() {
  const xs = range(9).map(i => ({ x: 349.5 + i * 77.95, label: String(Number((0.2 + i * 0.1).toFixed(1))) }));
  const ys = range(12).map(i => ({ y: 1089 - i * 60.35, label: String(Number((i * 0.005).toFixed(3))) }));
  return (
    <PlotSvg viewBox="265 411 725 737" role="img" aria-label="Crossplot of toc_final against dual_water">
      <g stroke="#d2d2d2" strokeWidth="1.500">
        {xs.map(t => <path key={t.label} d={`M${t.x} 421V1089`} />)}
        {ys.map(t => <path key={t.label} d={`M326 ${t.y}H973`} />)}
      </g>
      <g stroke="#333" strokeWidth="1.500" fill="none">
        <path d="M318 421.500h8V1089H318M326 1089v8M326 1089H973" />
        {xs.map(t => <path key={t.label} d={`M${t.x} 1089v7`} />)}
        {ys.map(t => <path key={t.label} d={`M318 ${t.y}h8`} />)}
      </g>
      <path d={dotPath} stroke="#4a70b2" strokeWidth="5" strokeLinecap="round" />
      <path d="M465 1088h10M478 1088h21M503 1088h469" stroke="#3c62a4" strokeWidth="3" />
      <path d="M972 980V1089" stroke="#4a70b2" strokeWidth="3" />
      <path d="M465 1090H973" stroke="#2c4370" strokeWidth="1.500" />
      <g fontSize="11" fill="#333">
        {xs.map(t => <text key={t.label} x={t.x - 1} y="1114" textAnchor="middle">{t.label}</text>)}
        {ys.map(t => <text key={t.label} x="312" y={t.y + 5} textAnchor="end">{t.label}</text>)}
      </g>
      <g fontSize="16" fill="#333" textAnchor="middle">
        <text x="649" y="1130">dual_water</text>
        <text transform="translate(279 755) rotate(-90)">toc_final</text>
      </g>
    </PlotSvg>
  );
}

function LogTracks() {
  const left = 1341.5;
  const w = 236;
  const grid = [
    ...range(8).map(i => left + 25.3 + i * 26.3),
    ...range(10).map(i => left + w + 21.5 * (i + 1)),
    ...range(8).map(i => left + 2 * w + 25.3 + i * 26.3),
  ];
  return (
    <svg width="780" height="1012" viewBox="1283 110 780 1012" role="img" aria-label="Well log curves by depth">
      <g stroke="#dedede" strokeWidth="1.500">
        {grid.map(x => <path key={x} d={`M${x} 110V1122`} />)}
        {range(13).map(i => <path key={i} d={`M${left} ${166 + i * 74.5}H2063`} />)}
      </g>
      <path d="M1294 284.500H2063M1294 950H2063" stroke="#8c8c8c" strokeWidth="2.500" />
      <path d={range(4).map(i => `M${left + i * w} 110V1122`).join('')} stroke="#222" strokeWidth="1.500" />
      <g fill="none" stroke="#3a3a3a" strokeWidth="1.300" strokeLinejoin="round">
        <path d={dualWater} />
        <path d={tocFinal} />
        <path d={simandoux} />
      </g>
      <g fontSize="15" fill="#333">
        {range(6).map(i => (
          <text key={i} x="1296" y={246 + i * 149}>{10100 + i * 100}</text>
        ))}
      </g>
    </svg>
  );
}

/* ---------- app ---------- */

const tracks = [
  { name: 'dual_water', min: '0.104', max: '1' },
  { name: 'toc_final', min: '0', max: '0.055' },
  { name: 'simandoux', min: '0.104', max: '1' },
];

export default function App() {
  return (
    <>
      <GlobalStyle />
      <Page>
        <Header>
          <HeaderLeft>
            <Menu>
              <MenuButton>File</MenuButton>
              <MenuButton>Edit</MenuButton>
              <MenuButton>Help</MenuButton>
            </Menu>
            <FileTab $active>*PowderRiver.cpi x</FileTab>
            <FileTab>__cpiconfig__</FileTab>
          </HeaderLeft>
          <HeaderCenter>
            <WellName>
              49005259200000
              <WellSub>KATIE 1</WellSub>
            </WellName>
            <TextInput $h={24} $w="204px" placeholder="Search Wells" aria-label="Search Wells" />
            <DropDown label="Template" value="Equation Playground" w="232px" h={23} />
          </HeaderCenter>
          <HeaderRight>
            <UserButton>cs</UserButton>
          </HeaderRight>
        </Header>

        <Workspace>
          <Sidebar>
            <Tree>
              <TreeRow $root>
                <svg width="12" height="8" viewBox="0 0 12 8" fill="none">
                  <path d="M1 1l5 5.500L11 1" stroke={slate} strokeWidth="2" />
                </svg>
                <svg width="20" height="15" viewBox="0 0 20 15" fill={slate}>
                  <path d="M1 11V1.500L2 0h5l2 2h7l1 1v1.500H5L3 6z" />
                  <path d="M4 6h16l-2 8.500H2z" />
                </svg>
                My files
              </TreeRow>
              {files.map(([name, shared], i) => (
                <TreeRow key={name}>
                  {i < 10 ? <FileIcon /> : <DatabaseIcon />}
                  {name}
                  {shared && <PeopleIcon />}
                </TreeRow>
              ))}
            </Tree>
            <ScrollTrack>
              <ScrollArrow><svg width="9" height="5"><path d="M0 5h9L4.500 0z" fill="#a3a3a3" /></svg></ScrollArrow>
              <ScrollThumb $size={991} />
              <ScrollSpace $size={81} />
              <ScrollArrow><svg width="9" height="5"><path d="M0 0h9L4.500 5z" fill="#505050" /></svg></ScrollArrow>
            </ScrollTrack>
          </Sidebar>

          <Middle>
            <Panel>
              <TabBar>
                <Tab $active>CPI Params</Tab>
                <TabTools><Burger label="Panel menu" /></TabTools>
              </TabBar>
              <Equations>
                <EquationHead>
                  <span>Name</span>
                  <span>Expression</span>
                </EquationHead>
                {['dual_water', 'simandoux', 'toc_final'].map(name => (
                  <EquationRow key={name}>
                    <TextInput $h={30} $pad={9} defaultValue={name} aria-label="Name" />
                    <TextInput $h={30} $pad={9} aria-label={`Expression for ${name}`} />
                    <IconButton aria-label={`Remove ${name}`}><Cross size={13} /></IconButton>
                  </EquationRow>
                ))}
                <AddButton>
                  <svg width="15" height="15" viewBox="0 0 15 15">
                    <path d="M7.500 1v14M0 8h15" stroke={slate} strokeWidth="2" />
                  </svg>
                  Add Equation
                </AddButton>
              </Equations>
            </Panel>

            <Panel $divided>
              <TabBar>
                <Tab $active>Crossplot</Tab>
                <Tab>Well List</Tab>
                <Tab>Map</Tab>
                <TabTools>
                  <DropDown label="Plot preset" value="Custom" w="142px" h={23} />
                  <Burger label="Plot menu" />
                </TabTools>
              </TabBar>
              <CrossplotBody>
                <Crossplot />
                <Settings>
                  <Card>
                    <CardTitle><Triangle open />Setup</CardTitle>
                    <TypeRow>
                      <FieldLabel as="span">Type:</FieldLabel>
                      <DropDown label="Type" value="Custom" w="142px" h={22} />
                    </TypeRow>
                    <Stack>
                      <TagBox>
                        <Tag>
                          All Formations
                          <IconButton aria-label="Remove All Formations"><Cross size={11} color="#c3ccd4" weight={1.5} /></IconButton>
                        </Tag>
                        <TagInput placeholder="Formations..." aria-label="Formations" />
                        <IconButton aria-label="Clear formations"><Cross size={15} weight={1.8} /></IconButton>
                      </TagBox>
                      <CurveSelect label="X curve" value="dual_water" />
                      <CurveSelect label="Y curve" value="toc_final" />
                    </Stack>
                    <FieldLabel htmlFor="filter">Filter:</FieldLabel>
                    <TextInput id="filter" $h={25} defaultValue="!@badhole" />
                  </Card>
                  <Card>
                    <CardTitle><Triangle open />Color</CardTitle>
                    <FieldLabel htmlFor="expression">Expression:</FieldLabel>
                    <TextInput id="expression" $h={25} />
                    <RangeRow>
                      <FieldLabel htmlFor="min">Min:</FieldLabel>
                      <TextInput id="min" $h={24} placeholder="Minimum value" />
                      <FieldLabel htmlFor="max">Max:</FieldLabel>
                      <TextInput id="max" $h={24} placeholder="Maximum value" />
                    </RangeRow>
                  </Card>
                  <Card><CardTitle><Triangle />X Axis</CardTitle></Card>
                  <Card><CardTitle><Triangle />Y Axis</CardTitle></Card>
                </Settings>
                <Collapse aria-label="Collapse settings">
                  <svg width="14" height="13" viewBox="0 0 14 13" fill="none">
                    <path d="M1 1l5 5.500L1 12M7 1l5 5.500L7 12" stroke={slate} strokeWidth="2" />
                  </svg>
                </Collapse>
              </CrossplotBody>
            </Panel>
          </Middle>

          <LogPanel>
            <LogTabBar>
              <Tab $active>Well Log</Tab>
              <Tab>LAS</Tab>
              <Tab>Cross Section</Tab>
            </LogTabBar>
            <LogHead>
              <DepthHead>Depth</DepthHead>
              {tracks.map(t => (
                <TrackHead key={t.name}>
                  {t.name}
                  <Scale><span>{t.min}</span><span>{t.max}</span></Scale>
                </TrackHead>
              ))}
            </LogHead>
            <LogBody><LogTracks /></LogBody>
            <ScrollTrack $horizontal>
              <ScrollArrow><svg width="5" height="9"><path d="M5 0v9L0 4.500z" fill="#a3a3a3" /></svg></ScrollArrow>
              <ScrollThumb $horizontal $size={677} />
              <ScrollSpace $size={69} />
            </ScrollTrack>
          </LogPanel>
        </Workspace>
      </Page>
    </>
  );
}
